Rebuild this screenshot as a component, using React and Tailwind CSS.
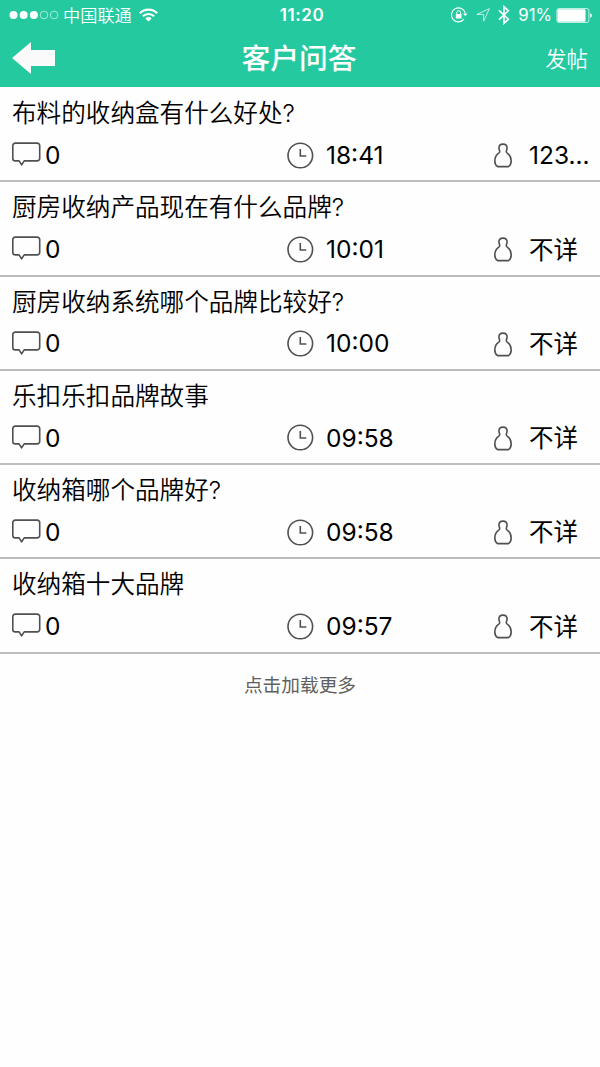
const questions = [
  { title: '布料的收纳盒有什么好处?', replies: 0, time: '18:41', author: '123...' },
  { title: '厨房收纳产品现在有什么品牌?', replies: 0, time: '10:01', author: '不详' },
  { title: '厨房收纳系统哪个品牌比较好?', replies: 0, time: '10:00', author: '不详' },
  { title: '乐扣乐扣品牌故事', replies: 0, time: '09:58', author: '不详' },
  { title: '收纳箱哪个品牌好?', replies: 0, time: '09:58', author: '不详' },
  { title: '收纳箱十大品牌', replies: 0, time: '09:57', author: '不详' },
];

const App = () => {
  return (
    <div className="w-[600px] h-[1067px] overflow-hidden bg-[#fefefe] text-black font-['Inter','Noto_Sans_CJK_SC',sans-serif]">
      {/* Header */}
      <header className="h-[87px] bg-[#25c9a0] text-white">
        <StatusBar />
        <NavBar />
      </header>

      {/* Question list */}
      <ul className="pt-px">
        {questions.map((question, index) => (
          <QuestionRow key={index} question={question} />
        ))}
      </ul>

      {/* Load more */}
      <button className="block w-full pt-[17px] text-center text-[18.7px] leading-[29px] text-[#606060]">
        点击加载更多
      </button>
    </div>
  );
};

const StatusBar = () => (
  <div className="grid grid-cols-[1fr_auto_1fr] items-center h-[30px] pl-[9px] pr-2">
    <div className="flex items-center">
      <svg className="w-[50px] h-[10px]" viewBox="0 0 50 10">
        <circle cx="4.5" cy="5" r="4" fill="white" />
        <circle cx="14.7" cy="5" r="4" fill="white" />
        <circle cx="24.9" cy="5" r="4" fill="white" />
        <circle cx="35" cy="5" r="3.8" fill="none" stroke="white" strokeWidth="0.6" />
        <circle cx="45.1" cy="5" r="3.8" fill="none" stroke="white" strokeWidth="0.6" />
      </svg>
      <span className="ml-1 pt-px text-[17.2px] leading-none font-[350]">中国联通</span>
      <svg className="ml-[7px] w-[19px] h-[14px]" viewBox="0 0 19 14" fill="none" stroke="white" strokeWidth="2.1">
        <path d="M0.8 5.2a12.3 12.3 0 0 1 17.4 0" />
        <path d="M3.9 8.3a7.9 7.9 0 0 1 11.2 0" />
        <path d="M9.5 13.6L6.3 10.4a4.5 4.5 0 0 1 6.4 0z" fill="white" stroke="none" />
      </svg>
    </div>
    <span className="pl-[3px] text-[17px] leading-none font-semibold tracking-[0.6px]">11:20</span>
    <div className="flex items-center justify-end">
      <svg className="w-[17px] h-[16px]" viewBox="0 0 17 16" fill="none" stroke="white">
        <path d="M14.3 6.2A7 7 0 1 0 13 12.2" strokeWidth="1.1" />
        <path d="M12 6.4h4.6l-2.3 2.9z" fill="white" stroke="none" />
        <rect x="4.8" y="7" width="5.8" height="4.6" rx="0.5" fill="white" stroke="none" />
        <path d="M5.8 7.3V5.6a1.9 1.9 0 0 1 3.8 0v1.7" strokeWidth="1" />
      </svg>
      <svg className="ml-2 w-[14px] h-[14px]" viewBox="0 0 14 14" fill="none" stroke="white" strokeWidth="0.7">
        <path d="M13.4 0.6L7.6 13.2V6.4H0.9z" />
      </svg>
      <svg className="ml-2 w-[12px] h-[20px]" viewBox="0 0 12 20" fill="none" stroke="white" strokeWidth="1.6">
        <path d="M1 5.4l9.4 8.8L6 18.3V1.7l4.4 4.1L1 14.6" />
      </svg>
      <span className="ml-2 text-[16.8px] leading-none">91%</span>
      <svg className="ml-1 w-[36px] h-[15px]" viewBox="0 0 36 15">
        <rect x="0.9" y="0.5" width="32" height="14" rx="2" fill="none" stroke="white" strokeWidth="0.7" />
        <rect x="1.5" y="1.3" width="28" height="12.4" rx="1" fill="white" />
        <path d="M34.2 5.2c2.2 0.7 2.2 3.9 0 4.6z" fill="white" />
      </svg>
    </div>
  </div>
);

const NavBar = () => (
  <nav className="grid grid-cols-[1fr_auto_1fr] items-center h-[56px] px-3">
    <button aria-label="返回">
      <svg className="w-[43px] h-[32px]" viewBox="0 0 43 32">
        <path d="M0 16L19 0v8h24v16H19v8z" fill="#fafafa" />
      </svg>
    </button>
    <h1 className="pt-0.5 pr-0.5 text-[28.8px] leading-none font-medium">客户问答</h1>
    <button className="pt-[3px] text-right text-[21.4px] leading-none font-[350]">发帖</button>
  </nav>
);

const QuestionRow = ({ question }) => (
  <li className="h-[94.25px] px-3 pt-[7px] border-b-2 border-[#bcbcbc]">
    <h2 className="h-9 text-[24.6px] leading-[36px] font-[350] whitespace-nowrap">{question.title}</h2>
    <div className="grid grid-cols-[275px_206px_1fr] items-center h-12 text-[24.5px] leading-none whitespace-nowrap">
      <div className="flex items-center gap-1">
        <CommentIcon />
        <span>{question.replies}</span>
      </div>
      <div className="flex items-center gap-3">
        <ClockIcon />
        <span>{question.time}</span>
      </div>
      <div className="flex items-center gap-4">
        <PersonIcon />
        <span className="pt-px">{question.author}</span>
      </div>
    </div>
  </li>
);

const CommentIcon = () => (
  <svg className="w-[29px] h-[26px]" viewBox="0 0 29 26" fill="none" stroke="#505050" strokeWidth="1.6" strokeLinejoin="round">
    <path d="M3.3 1.1h21.9a2.5 2.5 0 0 1 2.5 2.5v12.8a2.5 2.5 0 0 1-2.5 2.5H12.2L9.6 22.9 7.1 18.9H3.3a2.5 2.5 0 0 1-2.5-2.5V3.6a2.5 2.5 0 0 1 2.5-2.5z" />
  </svg>
);

const ClockIcon = () => (
  <svg className="w-[27px] h-[27px]" viewBox="0 0 27 27" fill="none" stroke="#505050" strokeWidth="1.6">
    <circle cx="13.3" cy="13.5" r="12.3" />
    <path d="M13.3 7v7h6" />
  </svg>
);

const PersonIcon = () => (
  <svg className="w-[20px] h-[26px]" viewBox="0 0 20 26" fill="none" stroke="#505050" strokeWidth="1.6" strokeLinejoin="round">
    <path d="M4.6 24.6C2.7 23.4 1.8 21.6 1.8 19c0-3.4 1.4-6 3.7-7.6C6.6 10.6 7 9.900 6.600 8.800 6.200 7.900 5.900 7.100 5.900 6.100 5.900 3.700 7.500 2.100 10 2.100s4.100 1.600 4.100 4c0 1-.3 1.800-.7 2.700-.4 1.100 0 1.800 1.100 2.600 2.300 1.600 3.700 4.200 3.700 7.600 0 2.600-.9 4.400-2.800 5.600z" />
  </svg>
);

export default App;
